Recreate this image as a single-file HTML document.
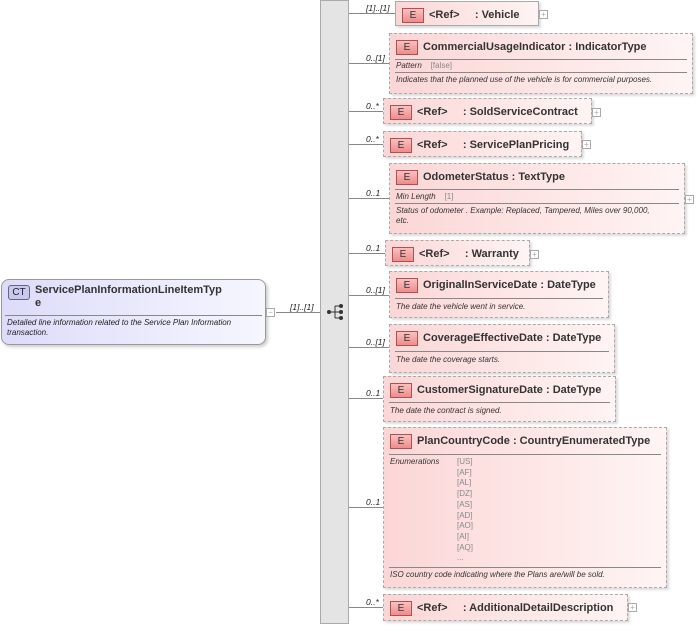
<!DOCTYPE html>
<html><head><style>
body{margin:0;width:697px;height:627px;background:#fff;position:relative;overflow:hidden;font-family:"Liberation Sans",sans-serif;color:#222}
.b{position:absolute;box-sizing:border-box;border:1px dashed #aaa;background:linear-gradient(to right,#fcd6d6,#fff4f4);box-shadow:2px 2px 2px #ddd}
.s{border-style:solid}
.e{position:absolute;left:6px;top:6px;width:20px;height:13px;border:1px solid #b05050;background:linear-gradient(#fbc0c0,#ee8c8c);font-size:10px;text-align:center;line-height:13px;color:#333}
.t{position:absolute;left:33px;top:7px;font-size:11px;font-weight:bold;white-space:nowrap;color:#333}
.hr{position:absolute;left:5px;right:5px;border-top:1px solid #888}
.d{position:absolute;left:6px;font-size:8px;font-style:italic;color:#333;white-space:nowrap}
.l{position:absolute;height:1px;background:#888;left:349px}
.m{position:absolute;font-size:8.5px;font-style:italic;color:#222}
.p{position:absolute;width:7px;height:7px;border:1px solid #aaa;background:#fff;font-size:8px;line-height:7px;text-align:center;color:#aaa}
.g{color:#888;font-style:normal}
</style></head><body>
<div style="position:absolute;left:1px;top:279px;width:265px;height:66px;box-sizing:border-box;border:1px solid #999;border-radius:8px;background:linear-gradient(to right,#dcdcfa,#f6f6ff);box-shadow:2px 2px 3px #ccc">
<div style="position:absolute;left:6px;top:5px;width:20px;height:13px;border:1px solid #667;border-radius:3px;background:#c8c8f0;font-size:10px;line-height:13px;text-align:center">CT</div>
<div style="position:absolute;left:33px;top:4px;font-size:11px;font-weight:bold;line-height:13px;color:#333">ServicePlanInformationLineItemTyp<br>e</div>
<div style="position:absolute;left:3px;right:3px;top:35px;border-top:1px solid #888"></div>
<div style="position:absolute;left:5px;top:38px;font-size:8px;font-style:italic;line-height:10px">Detailed line information related to the Service Plan Information<br>transaction.</div>
</div>
<div class="p" style="left:266px;top:308px">−</div>
<div style="position:absolute;left:276px;top:312px;width:44px;height:1px;background:#888"></div>
<div class="m" style="left:290px;top:302px">[1]..[1]</div>
<div style="position:absolute;left:320px;top:0;width:29px;height:624px;background:#e4e4e4;border:1px solid #aaa;box-sizing:border-box"></div>
<svg style="position:absolute;left:326px;top:302px" width="20" height="20"><line x1="3" y1="10" x2="9" y2="10" stroke="#333"/><line x1="9" y1="4" x2="9" y2="16" stroke="#333"/><line x1="9" y1="4" x2="15" y2="4" stroke="#333"/><line x1="9" y1="10" x2="15" y2="10" stroke="#333"/><line x1="9" y1="16" x2="15" y2="16" stroke="#333"/><circle cx="3" cy="10" r="2" fill="#333"/><circle cx="15" cy="4" r="2" fill="#333"/><circle cx="15" cy="10" r="2" fill="#333"/><circle cx="15" cy="16" r="2" fill="#333"/></svg>

<div class="l" style="top:13px;width:46px"></div><div class="m" style="left:366px;top:3px">[1]..[1]</div>
<div class="l" style="top:63px;width:40px"></div><div class="m" style="left:366px;top:53px">0..[1]</div>
<div class="l" style="top:111px;width:34px"></div><div class="m" style="left:366px;top:101px">0..*</div>
<div class="l" style="top:144px;width:34px"></div><div class="m" style="left:366px;top:134px">0..*</div>
<div class="l" style="top:198px;width:40px"></div><div class="m" style="left:366px;top:188px">0..1</div>
<div class="l" style="top:253px;width:37px"></div><div class="m" style="left:366px;top:243px">0..1</div>
<div class="l" style="top:295px;width:40px"></div><div class="m" style="left:366px;top:285px">0..[1]</div>
<div class="l" style="top:347px;width:40px"></div><div class="m" style="left:366px;top:337px">0..[1]</div>
<div class="l" style="top:398px;width:34px"></div><div class="m" style="left:366px;top:388px">0..1</div>
<div class="l" style="top:507px;width:34px"></div><div class="m" style="left:366px;top:497px">0..1</div>
<div class="l" style="top:607px;width:34px"></div><div class="m" style="left:366px;top:597px">0..*</div>

<div class="b s" style="left:395px;top:1px;width:144px;height:25px"><div class="e">E</div><div class="t">&lt;Ref&gt;&nbsp;&nbsp;&nbsp;&nbsp;&nbsp;: Vehicle</div></div>
<div class="p" style="left:539px;top:10px">+</div>

<div class="b" style="left:389px;top:33px;width:304px;height:61px"><div class="e">E</div><div class="t">CommercialUsageIndicator : IndicatorType</div><div class="hr" style="top:25px"></div><div class="d" style="top:27px">Pattern &nbsp;&nbsp;&nbsp;<span class="g">[false]</span></div><div class="hr" style="top:38px"></div><div class="d" style="top:41px">Indicates that the planned use of the vehicle is for commercial purposes.</div></div>

<div class="b" style="left:383px;top:98px;width:209px;height:26px"><div class="e">E</div><div class="t">&lt;Ref&gt;&nbsp;&nbsp;&nbsp;&nbsp;&nbsp;: SoldServiceContract</div></div>
<div class="p" style="left:592px;top:108px">+</div>
<div class="b" style="left:383px;top:131px;width:199px;height:26px"><div class="e">E</div><div class="t">&lt;Ref&gt;&nbsp;&nbsp;&nbsp;&nbsp;&nbsp;: ServicePlanPricing</div></div>
<div class="p" style="left:582px;top:140px">+</div>

<div class="b" style="left:389px;top:163px;width:296px;height:71px"><div class="e">E</div><div class="t">OdometerStatus : TextType</div><div class="hr" style="top:25px"></div><div class="d" style="top:28px">Min Length &nbsp;&nbsp;&nbsp;<span class="g">[1]</span></div><div class="hr" style="top:39px"></div><div class="d" style="top:42px;line-height:10px">Status of odometer . Example: Replaced, Tampered, Miles over 90,000,<br>etc.</div></div>
<div class="p" style="left:685px;top:195px">+</div>

<div class="b" style="left:385px;top:240px;width:145px;height:26px"><div class="e">E</div><div class="t">&lt;Ref&gt;&nbsp;&nbsp;&nbsp;&nbsp;&nbsp;: Warranty</div></div>
<div class="p" style="left:530px;top:250px">+</div>

<div class="b" style="left:389px;top:271px;width:220px;height:47px"><div class="e">E</div><div class="t">OriginalInServiceDate : DateType</div><div class="hr" style="top:26px"></div><div class="d" style="top:30px">The date the vehicle went in service.</div></div>
<div class="b" style="left:389px;top:324px;width:226px;height:49px"><div class="e">E</div><div class="t">CoverageEffectiveDate : DateType</div><div class="hr" style="top:26px"></div><div class="d" style="top:30px">The date the coverage starts.</div></div>
<div class="b" style="left:383px;top:376px;width:233px;height:46px"><div class="e">E</div><div class="t">CustomerSignatureDate : DateType</div><div class="hr" style="top:25px"></div><div class="d" style="top:29px">The date the contract is signed.</div></div>

<div class="b" style="left:383px;top:427px;width:284px;height:161px"><div class="e">E</div><div class="t">PlanCountryCode : CountryEnumeratedType</div><div class="hr" style="top:26px"></div><div class="d" style="top:29px">Enumerations</div><div class="d g" style="left:73px;top:29px;line-height:10.7px">[US]<br>[AF]<br>[AL]<br>[DZ]<br>[AS]<br>[AD]<br>[AO]<br>[AI]<br>[AQ]<br>...</div><div class="hr" style="top:139px"></div><div class="d" style="top:142px">ISO country code indicating where the Plans are/will be sold.</div></div>

<div class="b" style="left:383px;top:594px;width:245px;height:27px"><div class="e">E</div><div class="t">&lt;Ref&gt;&nbsp;&nbsp;&nbsp;&nbsp;&nbsp;: AdditionalDetailDescription</div></div>
<div class="p" style="left:628px;top:603px">+</div>
</body></html>
